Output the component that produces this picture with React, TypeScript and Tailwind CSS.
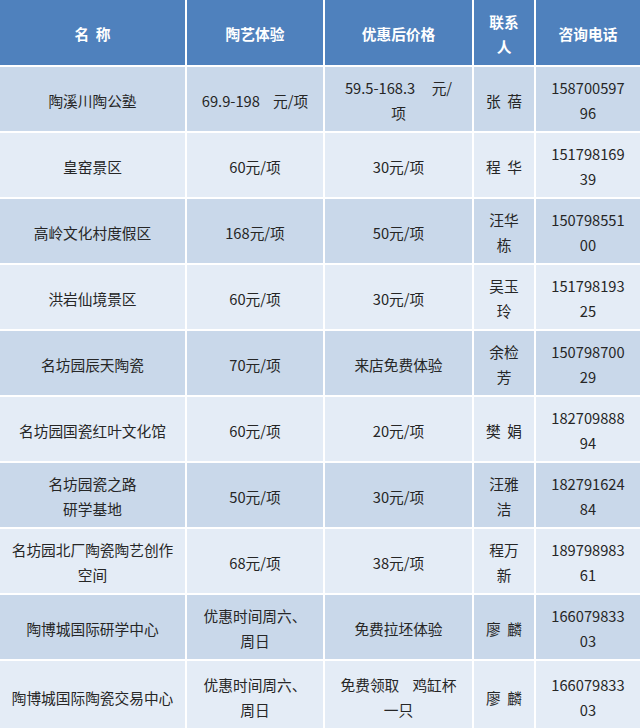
import React from "react";

type Row = {
    name: React.ReactNode;
    price: React.ReactNode;
    deal: React.ReactNode;
    contact: React.ReactNode;
    phone: React.ReactNode;
};

const rows: Row[] = [
    {
        name: "陶溪川陶公塾",
        price: <>69.9-198&nbsp;&nbsp;&nbsp; 元/项</>,
        deal: <>59.5-168.3&nbsp;&nbsp;&nbsp;&nbsp; 元/<br/>项</>,
        contact: "张  蓓",
        phone: <>158700597<br/>96</>,
    },
    {name: "皇窑景区", price: "60元/项", deal: "30元/项", contact: "程  华", phone: <>151798169<br/>39</>},
    {name: "高岭文化村度假区", price: "168元/项", deal: "50元/项", contact: <>汪华<br/>栋</>, phone: <>150798551<br/>00</>},
    {name: "洪岩仙境景区", price: "60元/项", deal: "30元/项", contact: <>吴玉<br/>玲</>, phone: <>151798193<br/>25</>},
    {name: "名坊园辰天陶瓷", price: "70元/项", deal: "来店免费体验", contact: <>余检<br/>芳</>, phone: <>150798700<br/>29</>},
    {name: "名坊园国瓷红叶文化馆", price: "60元/项", deal: "20元/项", contact: "樊  娟", phone: <>182709888<br/>94</>},
    {name: <>名坊园瓷之路<br/>研学基地</>, price: "50元/项", deal: "30元/项", contact: <>汪雅<br/>洁</>, phone: <>182791624<br/>84</>},
    {name: <>名坊园北厂陶瓷陶艺创作<br/>空间</>, price: "68元/项", deal: "38元/项", contact: <>程万<br/>新</>, phone: <>189798983<br/>61</>},
    {name: "陶博城国际研学中心", price: <>优惠时间周六、<br/>周日</>, deal: "免费拉坯体验", contact: "廖  麟", phone: <>166079833<br/>03</>},
    {name: "陶博城国际陶瓷交易中心", price: <>优惠时间周六、<br/>周日</>, deal: <>免费领取&nbsp;&nbsp;&nbsp; 鸡缸杯<br/>一只</>, contact: "廖  麟", phone: <>166079833<br/>03</>},
];

const headers: React.ReactNode[] = ["名  称", "陶艺体验", "优惠后价格", <>联系<br/>人</>, "咨询电话"];

export default function App() {
    return <div className="w-[640px] h-[728px] overflow-hidden bg-white"
                style={{fontFamily: '"Noto Sans CJK SC", "Noto Sans", sans-serif'}}>
        <div className="grid grid-cols-[185px_136px_147px_60px_104px] gap-[2px] bg-white">
            {headers.map((h, i) => (
                <div key={i}
                     className="h-[65px] pt-[2px] bg-[#4f81bd] text-white font-bold text-[14.7px] leading-[25px] flex items-center justify-center text-center whitespace-pre">
                    <div>{h}</div>
                </div>
            ))}
            {rows.map((r, i) => {
                const bg = i % 2 == 0 ? "bg-[#c9d8ea]" : "bg-[#e4ecf6]";
                const h = i == rows.length - 1 ? "h-[70px]" : "h-[64px]";
                return [r.name, r.price, r.deal, r.contact, r.phone].map((c, j) => (
                    <div key={`${i}-${j}`}
                         className={`${bg} ${h} pt-[2px] text-[#262626] text-[14.7px] leading-[25px] flex items-center justify-center text-center whitespace-pre`}>
                        <div>{c}</div>
                    </div>
                ));
            })}
        </div>
    </div>;
}
